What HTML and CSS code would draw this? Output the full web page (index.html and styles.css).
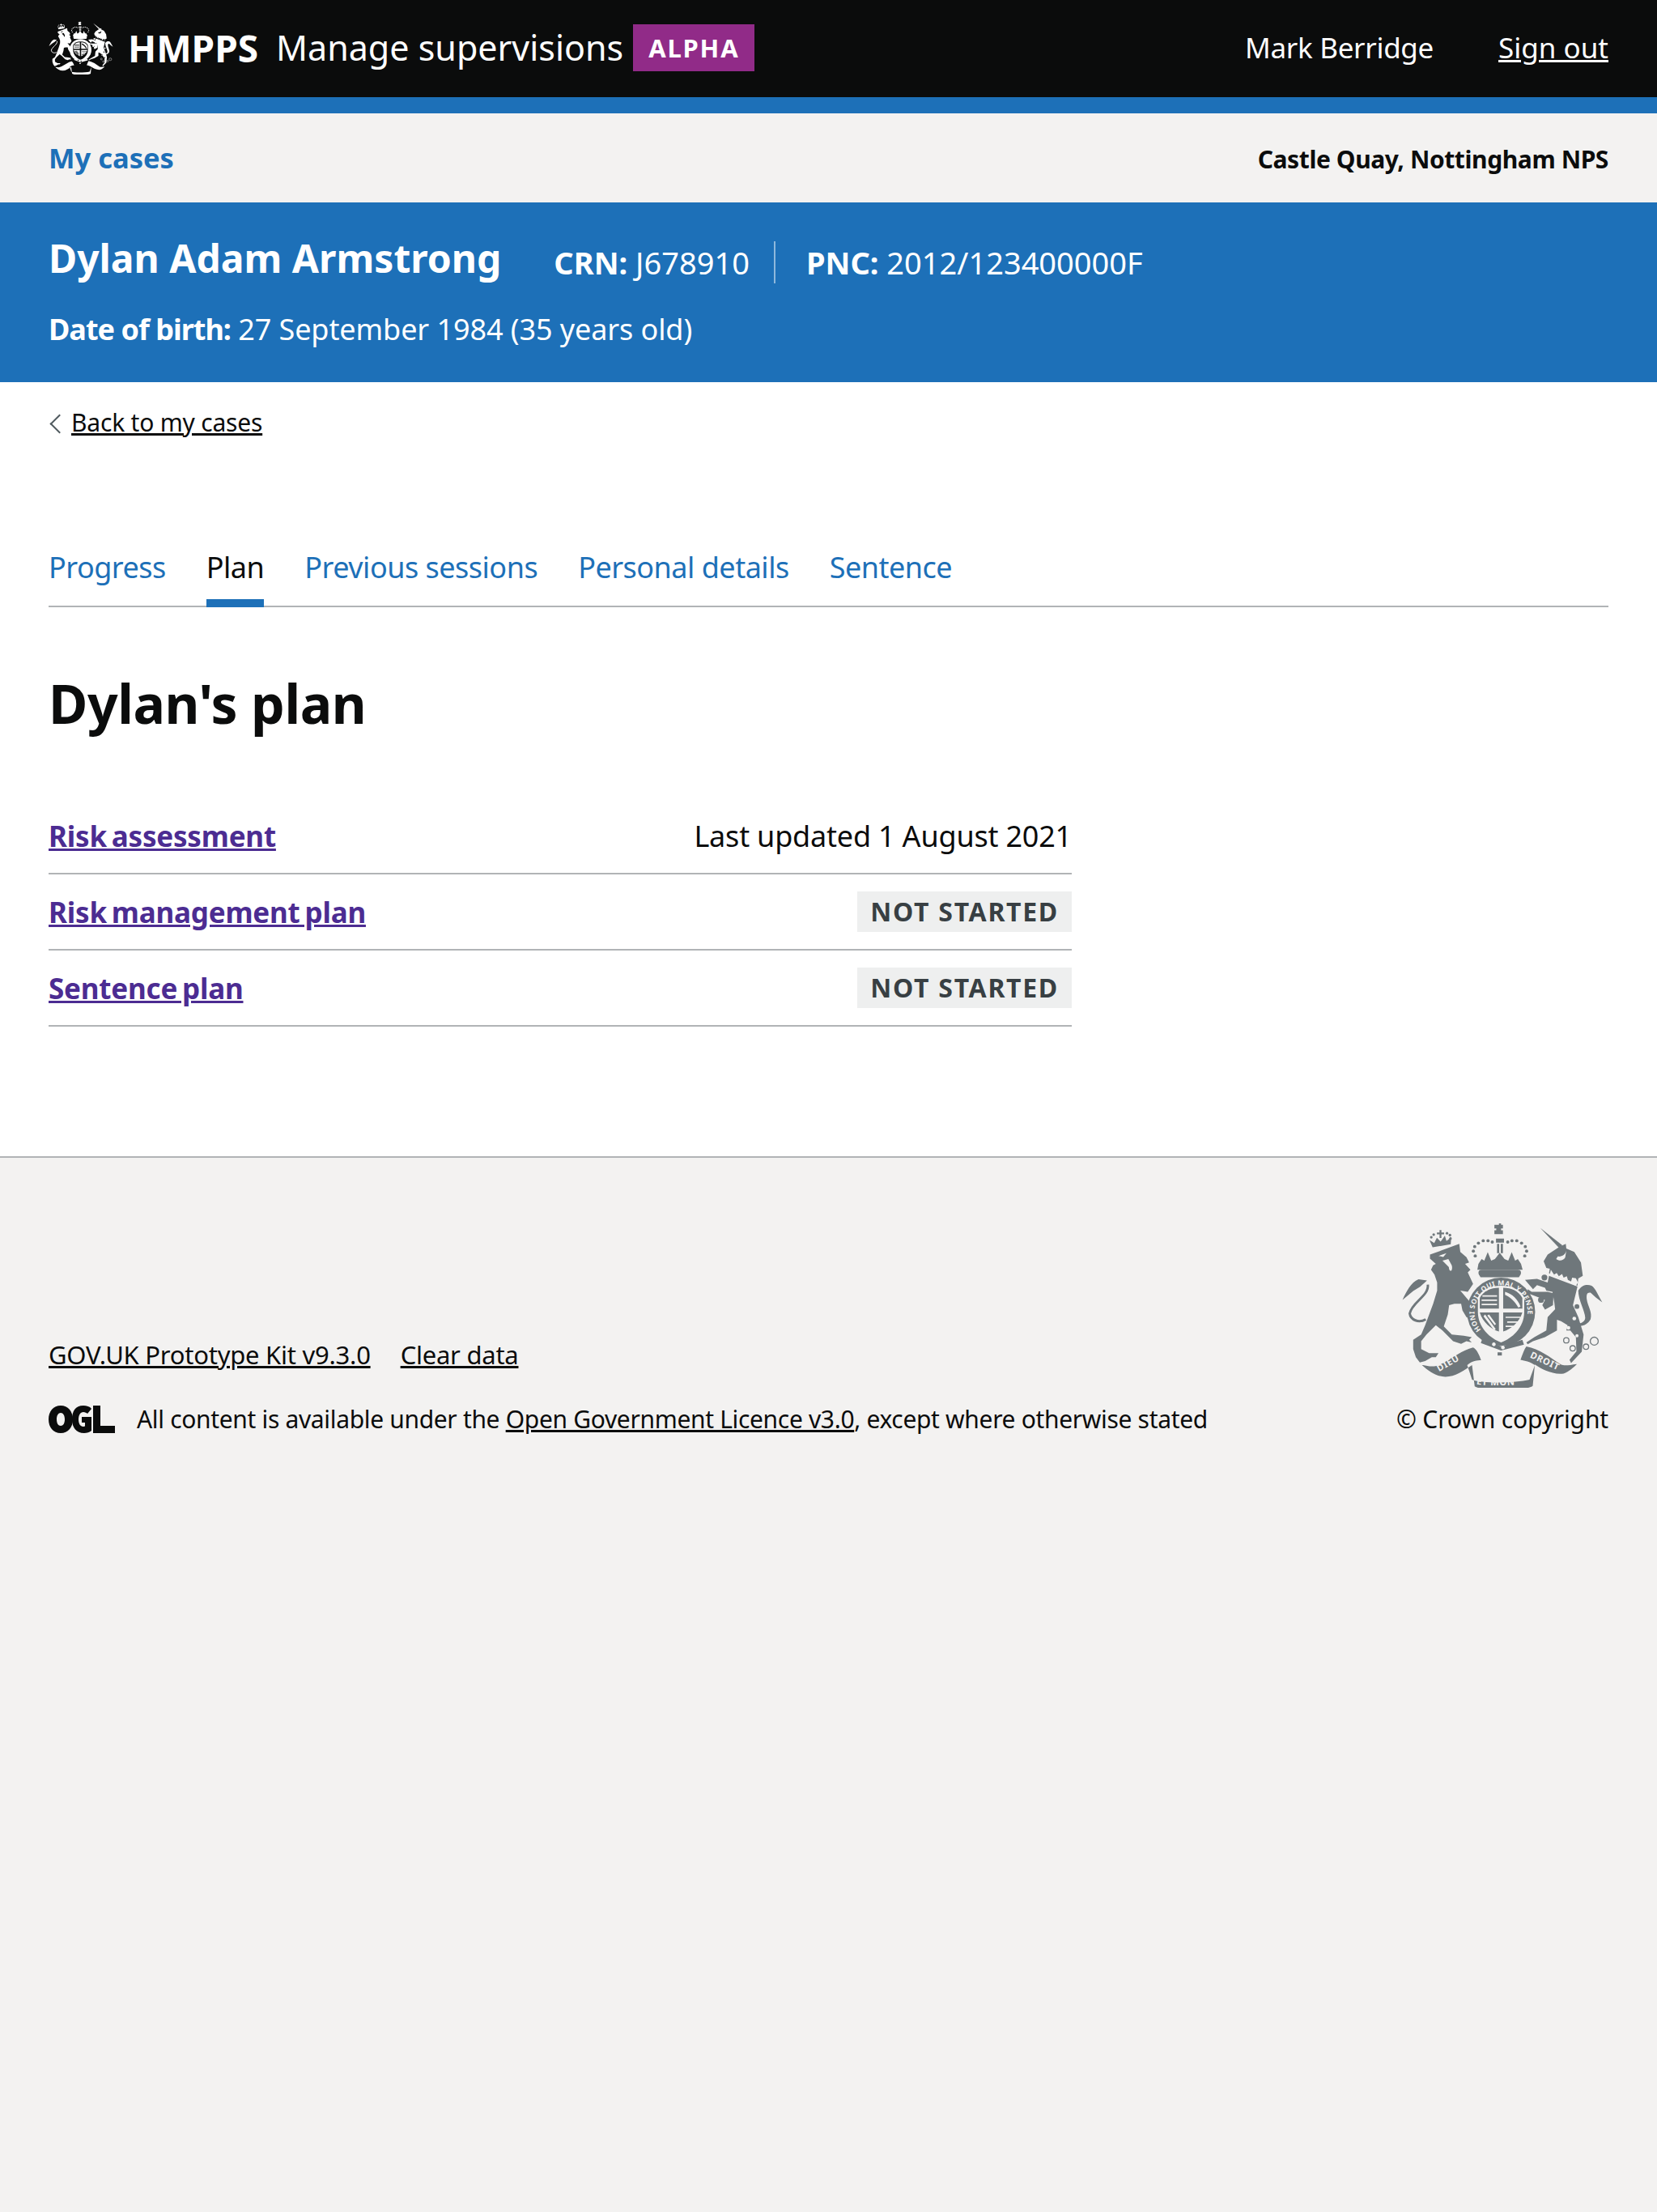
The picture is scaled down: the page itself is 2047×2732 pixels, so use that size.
FILE: index.html
```html
<!DOCTYPE html>
<html lang="en">
<head>
  <meta charset="UTF-8">
  <title>Dylan's plan - Manage supervisions</title>
  <link rel="stylesheet" href="styles.css">
</head>
<body>
  <svg class="defs" width="0" height="0" aria-hidden="true">
    <symbol id="crest" viewBox="150 85 760 620">
      <!-- lion crown -->
      <path d="M268 178l-12-28 18 12 10-20 14 14 16-22 6 20 18-14-2 26z"/>
      <path d="M284 122h10v-9h7v9h10v7h-10v14h-7v-14h-10z"/>
      <circle cx="263" cy="140" r="5"/><circle cx="272" cy="130" r="5"/><circle cx="322" cy="125" r="5"/><circle cx="333" cy="132" r="5"/><circle cx="335" cy="145" r="5"/>
      <!-- lion -->
      <path d="M258 205L300 190 368 165 372 195 395 215 405 235 390 240 410 262 400 272 420 315 400 345 372 340 410 385 430 430 415 450 395 440 380 415 375 390 350 390 330 395 325 430 310 475 340 505 385 510 415 515 405 525 415 535 395 530 375 540 345 530 305 490 280 470 245 505 225 530 225 560 255 575 290 575 280 590 265 590 240 605 220 610 205 590 195 560 195 525 225 505 240 470 255 430 270 390 285 340 285 310 275 280 262 262 270 245 280 240 258 220z"/>
      <path class="crest-gap" d="M290 210l30-10-12 14zM305 228l22-6 12 22c4 8 2 20-2 22-6 0-8-8-8-14z"/>
      <path d="M155 375c14-30 32-66 60-77l32 4-26 24-26 16z"/>
      <path class="crest-line" d="M250 318c5 42-60 66-68 108 3 24 34 38 60 22"/>
      <!-- royal crown -->
      <path d="M510 93h7v-5h8v5h7v14h-7v7h7v14h-32v-14h7v-7h-7v-14z"/>
      <path d="M506 145h30v15h-30zM510 165h8v35h-8zM524 165h8v35h-8z"/>
      <path d="M440 240l12-18 10 6 13-32 13 32 14-6 18-24 18 24 14 6 13-32 13 32 10-6 12 18 6 22H436z"/>
      <path d="M452 262h136c12 0 14 10 10 18l-6 10H448l-6-10c-4-8-2-18 10-18z"/>
      <g>
        <circle cx="428" cy="210" r="6"/><circle cx="421" cy="192" r="6"/><circle cx="426" cy="175" r="6"/><circle cx="440" cy="162" r="6"/><circle cx="458" cy="153" r="6"/><circle cx="476" cy="153" r="6"/><circle cx="492" cy="158" r="6"/>
        <circle cx="614" cy="210" r="6"/><circle cx="621" cy="192" r="6"/><circle cx="616" cy="175" r="6"/><circle cx="602" cy="162" r="6"/><circle cx="584" cy="153" r="6"/><circle cx="566" cy="153" r="6"/><circle cx="550" cy="158" r="6"/>
      </g>
      <!-- garter and shield -->
      <circle cx="525" cy="420" r="128"/>
      <path class="crest-gap" d="M525 322c45 0 75 18 87 43v55c0 60-47 100-87 115-40-15-87-55-87-115v-55c12-25 42-43 87-43z"/>
      <path d="M517 330c-32 0-57 12-72 38v40h72zM533 330c32 0 57 12 72 38v40h-72zM445 422h72v72c-30-10-60-34-72-72zM533 422h72c-12 38-42 62-72 72z"/>
      <path class="crest-gap" d="M455 358h55v5h-55zM452 374h58v5h-58zM452 390h58v5h-58zM540 345c28 8 48 28 58 55l-8 4c-12-22-28-38-50-48zM465 430l40 55-6 4-40-52zM480 430l26 36-5 4-28-36zM542 438h56v5h-56zM548 456h40v5h-40zM542 472h30v5h-30z"/>
      <path d="M455 520l70 30 80-25 6 18-86 22-76-28z"/>
      <path class="crest-gap" d="M498 535a7 7 0 1 1-.1 0zM532 547a7 7 0 1 1-.1 0z"/>
      <!-- unicorn -->
      <path d="M672 105L755 170 745 182z"/>
      <path d="M700 205L745 175 768 165 770 182 800 195 825 235 832 285 815 295 812 322 705 275 708 258 695 255 685 230z"/>
      <path d="M705 285L812 325 795 395 815 440 835 505 828 570 788 612 782 600 808 568 806 515 785 490 770 490 775 470 750 455 735 450 735 490 690 515 645 530 625 542 620 535 650 515 695 490 700 440 728 410 725 385 718 345 695 340 690 330 660 320 645 335 615 300 660 296 700 310z"/>
      <path d="M700 345L640 345 625 335 625 350 665 365 690 375 680 395 690 412 720 395 722 350z"/>
      <path class="crest-gap" d="M712 262l-4 18 16 4 82 38 8-12-8-16-14-2-4 14-12-6-4-14-12 6-6-14-12 8-8-12-10 6zM738 212c16 2 28-6 32-22l-4 26c-8 14-24 14-34 6z"/>
      <path d="M815 340c14-22 34-24 50-18 14 8 26 38 40 62l-24-18-20-18c-14-2-16 8-14 26 4 26 22 48 14 74-10 18-30 28-46 24l-4-8c16 0 30-8 30-22 0-24-26-66-26-102z"/>
      <g class="crest-chain">
        <circle cx="688" cy="291" r="11"/><circle cx="675" cy="375" r="11"/><circle cx="810" cy="400" r="9"/>
      </g>
      <g class="crest-chain crest-chain-out">
        <circle cx="770" cy="527" r="10"/><circle cx="794" cy="557" r="10"/><circle cx="844" cy="551" r="10"/><circle cx="875" cy="530" r="15"/>
      </g>
      <circle class="crest-gap" cx="800" cy="445" r="7"/><circle class="crest-gap" cx="778" cy="480" r="7"/><circle class="crest-gap" cx="810" cy="510" r="6"/>
      <!-- motto scroll -->
      <path d="M232 620c24 6 50 8 72-6 40-22 76-50 116-60 14 6 24 30 30 48-14 0-34 2-52 18l18 55c30 14 160 14 216 0l20-55c-20-14-36-16-54-20 8-20 14-40 22-50 50 10 88 40 130 68 14 6 30 2 60-2-12 12-30 28-50 36-40 6-86-18-108-34l-8 80c-30 20-170 26-218 2l-10-80c-30 20-64 44-100 44-32 0-64-22-88-44z"/>
      <path class="crest-gap" d="M520 580c-6 12-20 20-28 20 2 14 12 18 18 14 0 8-4 14-10 16h40c-6-2-10-8-10-16 6 4 16 0 18-14-8 0-22-8-28-20z"/>
      <path d="M512 572h16v12h-16z"/>
    </symbol>
  </svg>

  <header class="site-header">
    <div class="logo">
      <svg class="logo-crest"><use href="#crest"/></svg>
      <span class="logo-name">HMPPS</span>
      <span class="service-name">Manage supervisions</span>
      <strong class="phase-tag">ALPHA</strong>
    </div>
    <div class="user-nav">
      <span>Mark Berridge</span>
      <a href="#">Sign out</a>
    </div>
  </header>

  <nav class="sub-nav">
    <a href="#">My cases</a>
    <strong>Castle Quay, Nottingham NPS</strong>
  </nav>

  <section class="banner">
    <div class="banner-row">
      <h2 class="case-name">Dylan Adam Armstrong</h2>
      <div class="case-id"><b>CRN:</b> J678910</div>
      <div class="case-id case-pnc"><b>PNC:</b> 2012/123400000F</div>
    </div>
    <div class="case-dob"><b>Date of birth:</b> 27 September 1984 (35 years old)</div>
  </section>

  <main class="page">
    <a class="back-link" href="#">Back to my cases</a>

    <ul class="tabs">
      <li><a href="#">Progress</a></li>
      <li class="current"><a href="#">Plan</a></li>
      <li><a href="#">Previous sessions</a></li>
      <li><a href="#">Personal details</a></li>
      <li><a href="#">Sentence</a></li>
    </ul>

    <h1>Dylan's plan</h1>

    <div class="plan-list">
      <div class="plan-row">
        <a href="#">Risk assessment</a>
        <span>Last updated 1 August 2021</span>
      </div>
      <div class="plan-row">
        <a href="#">Risk management plan</a>
        <strong class="status-tag">NOT STARTED</strong>
      </div>
      <div class="plan-row">
        <a href="#">Sentence plan</a>
        <strong class="status-tag">NOT STARTED</strong>
      </div>
    </div>
  </main>

  <footer class="site-footer">
    <div class="footer-main">
      <div class="footer-links">
        <a href="#">GOV.UK Prototype Kit v9.3.0</a>
        <a href="#">Clear data</a>
      </div>
      <div class="licence">
        <svg class="ogl" viewBox="0 0 82 34"><path fill-rule="evenodd" d="M15 0c9 0 15 7 15 17s-6 17-15 17S0 27 0 17 6 0 15 0zm0 9c-3 0-5 3-5 8s2 8 5 8 5-3 5-8-2-8-5-8z"/><path d="M43 0c4 0 8 1 10 4l-5 6c-1-1-3-2-5-2-4 0-6 4-6 9s2 9 6 9l2-.5V21h-4v-7h12v17c-2 2-6 3-9 3-10 0-15-7-15-17S33 0 43 0z"/><path d="M55 0h9v25h18v9H55z"/></svg>
        <span>All content is available under the <a href="#">Open Government Licence v3.0</a>, except where otherwise stated</span>
      </div>
    </div>
    <div class="copyright">
      <svg class="footer-crest" viewBox="150 85 760 620">
        <use href="#crest" x="150" y="85" width="760" height="620"/>
        <path id="garter-arc" fill="none" d="M450 487A100 100 0 1 1 600 487"/>
        <path id="scroll-left" fill="none" d="M292 645L420 572"/>
        <path id="scroll-mid" fill="none" d="M432 692C470 698 560 698 612 690"/>
        <path id="scroll-right" fill="none" d="M632 590L760 650"/>
        <text class="crest-motto crest-garter"><textPath href="#garter-arc">HONI SOIT QUI MAL Y PENSE</textPath></text>
        <text class="crest-motto"><textPath href="#scroll-left">DIEU</textPath></text>
        <text class="crest-motto"><textPath href="#scroll-mid">ET MON</textPath></text>
        <text class="crest-motto"><textPath href="#scroll-right">DROIT</textPath></text>
      </svg>
      <a href="#">© Crown copyright</a>
    </div>
  </footer>
</body>
</html>
```

FILE: styles.css
```css
* {
  box-sizing: border-box;
  margin: 0;
  padding: 0;
}

html {
  background-color: #f3f2f1;
}

body {
  font-family: "Noto Sans", Arial, sans-serif;
  color: #0b0c0c;
  background-color: #f3f2f1;
  min-height: 2732px;
}

a {
  color: inherit;
}

.defs {
  position: absolute;
}

/* Crest */
.crest-gap {
  fill: var(--crest-bg);
}

.crest-line {
  fill: none;
  stroke: var(--crest-fg);
  stroke-width: 9;
}

.crest-chain {
  fill: var(--crest-fg);
}

.crest-chain-out {
  fill: none;
  stroke: var(--crest-fg);
  stroke-width: 4;
}

.crest-motto {
  fill: var(--crest-bg);
  font-size: 34px;
  font-weight: 700;
  letter-spacing: 2px;
}

.crest-garter {
  font-size: 26px;
  letter-spacing: 1px;
}

/* Header */
.site-header {
  display: flex;
  justify-content: space-between;
  align-items: center;
  height: 140px;
  padding: 0 60px 3px;
  background-color: #0b0c0c;
  border-bottom: 20px solid #1d70b8;
  color: white;
}

.logo {
  display: flex;
  align-items: center;
}

.logo-crest {
  --crest-fg: white;
  --crest-bg: #0b0c0c;
  width: 80px;
  height: 66px;
  fill: white;
  margin-right: 18px;
}

.logo-name {
  font-size: 46px;
  font-weight: 700;
  margin-right: 22px;
}

.service-name {
  font-size: 43px;
}

.phase-tag {
  margin-left: 12px;
  padding: 6px 19px;
  background-color: #912b88;
  font-size: 31px;
  line-height: 46px;
  letter-spacing: 1.8px;
}

.user-nav {
  display: flex;
  gap: 80px;
  font-size: 35px;
}

.user-nav span {
  letter-spacing: -0.3px;
}

/* Sub nav */
.sub-nav {
  display: flex;
  justify-content: space-between;
  align-items: center;
  height: 110px;
  padding: 0 60px;
  background-color: #f3f2f1;
}

.sub-nav a {
  margin-top: -2px;
  color: #1d70b8;
  font-size: 34.5px;
  font-weight: 700;
  text-decoration: none;
}

.sub-nav strong {
  margin-top: 2px;
  font-size: 30px;
  letter-spacing: -0.4px;
}

/* Case banner */
.banner {
  height: 222px;
  padding: 36px 60px 0;
  background-color: #1d70b8;
  color: white;
  font-size: 38px;
}

.banner-row {
  display: flex;
  align-items: center;
}

.case-name {
  font-size: 48px;
  margin-right: 65px;
}

.case-id {
  margin-top: 10px;
}

.case-pnc {
  margin-left: 30px;
  padding-left: 38px;
  border-left: 2px solid #8eb8dc;
}

.case-dob {
  margin-top: 31px;
  font-size: 36px;
  letter-spacing: -0.09px;
}

.case-dob b {
  letter-spacing: -1px;
}

/* Main */
.page {
  height: 958px;
  padding: 29px 60px 0;
  background-color: white;
  border-bottom: 2px solid #b1b4b6;
}

.back-link {
  display: inline-block;
  position: relative;
  padding-left: 28px;
  font-size: 30px;
  letter-spacing: -0.2px;
}

.back-link::before {
  content: "";
  position: absolute;
  left: 5px;
  top: 14px;
  width: 15px;
  height: 15px;
  border-left: 2px solid #505a5f;
  border-bottom: 2px solid #505a5f;
  transform: rotate(45deg);
}

.tabs {
  display: flex;
  gap: 50px;
  height: 74px;
  margin-top: 134px;
  list-style: none;
  border-bottom: 2px solid #b1b4b6;
  font-size: 36px;
  letter-spacing: -0.5px;
}

.tabs li {
  height: 74px;
}

.tabs a {
  color: #1d70b8;
  text-decoration: none;
}

.tabs .current {
  border-bottom: 10px solid #1d70b8;
}

.tabs .current a {
  color: #0b0c0c;
}

h1 {
  margin-top: 73px;
  font-size: 66px;
  letter-spacing: -0.4px;
}

.plan-list {
  width: 1264px;
  margin-top: 73px;
}

.plan-row {
  display: flex;
  justify-content: space-between;
  align-items: center;
  height: 94px;
  border-bottom: 2px solid #b1b4b6;
  font-size: 36px;
  letter-spacing: -0.2px;
}

.plan-row a {
  color: #4c2c92;
  font-size: 35px;
  font-weight: 700;
  letter-spacing: -0.2px;
  word-spacing: -3px;
}

.status-tag {
  padding: 0 16px;
  background-color: #eeefef;
  color: #383f43;
  font-size: 32px;
  line-height: 50px;
  letter-spacing: 1.7px;
}

/* Footer */
.site-footer {
  display: flex;
  justify-content: space-between;
  align-items: flex-end;
  padding: 80px 60px 0;
  font-size: 30px;
  letter-spacing: -0.33px;
}

.footer-links {
  display: flex;
  gap: 37px;
  font-size: 31px;
  letter-spacing: -0.25px;
}

.licence {
  display: flex;
  align-items: center;
  gap: 27px;
  margin-top: 38px;
}

.ogl {
  width: 82px;
  height: 34px;
  fill: #0b0c0c;
}

.copyright {
  display: flex;
  flex-direction: column;
  align-items: center;
  letter-spacing: -0.15px;
}

.copyright a {
  text-decoration: none;
}

.footer-crest {
  --crest-fg: #6f777b;
  --crest-bg: #f3f2f1;
  width: 250px;
  height: 204px;
  fill: #6f777b;
  margin-bottom: 18px;
}
```
